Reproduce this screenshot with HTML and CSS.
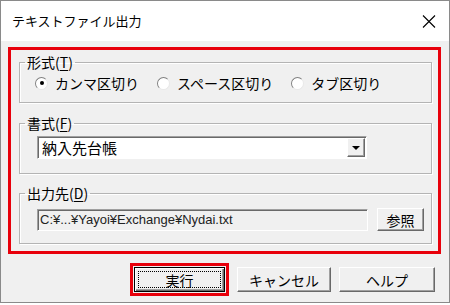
FILE: index.html
```html
<!doctype html>
<html lang="ja">
<head>
  <meta charset="utf-8">
  <title>テキストファイル出力</title>
  <link rel="stylesheet" href="styles.css">
</head>
<body>
  <div class="window">
    <div class="titlebar">
      <span class="title">テキストファイル出力</span>
      <svg class="close" width="14" height="13" viewBox="0 0 14 13">
        <path d="M1 0.5L13 12.5M13 0.5L1 12.5" stroke="#000" stroke-width="1.1" fill="none"/>
      </svg>
    </div>
    <div class="client">
      <div class="highlight">
        <fieldset class="group">
          <legend>形式(<u>T</u>)</legend>
          <div class="group-body radios">
            <label class="radio"><span class="radio-mark checked"></span>カンマ区切り</label>
            <label class="radio"><span class="radio-mark"></span>スペース区切り</label>
            <label class="radio"><span class="radio-mark"></span>タブ区切り</label>
          </div>
        </fieldset>
        <fieldset class="group">
          <legend>書式(<u>F</u>)</legend>
          <div class="group-body body-combo">
            <div class="combo">
              <span class="combo-text">納入先台帳</span>
              <span class="combo-btn"><span class="arrow"></span></span>
            </div>
          </div>
        </fieldset>
        <fieldset class="group">
          <legend>出力先(<u>D</u>)</legend>
          <div class="group-body body-path">
            <div class="path">C:¥...¥Yayoi¥Exchange¥Nydai.txt</div>
            <button class="btn btn-small">参照</button>
          </div>
        </fieldset>
      </div>
      <div class="buttons">
        <div class="mark">
          <button class="btn btn-default"><span class="focus">実行</span></button>
        </div>
        <button class="btn">キャンセル</button>
        <button class="btn btn-help">ヘルプ</button>
      </div>
    </div>
  </div>
</body>
</html>
```

FILE: styles.css
```css
body{
    margin: 0;
    background: #fff;
    font-family: "Noto Sans CJK JP", sans-serif;
    color: #000;
}
.window{
    width: 448px;
    height: 301px;
    border: 1px solid #8a8a8a;
    background: #f0f0f0;
}
.titlebar{
    height: 40px;
    background: #fff;
    display: flex;
    align-items: center;
    justify-content: space-between;
    padding: 0 13px 0 11px;
}
.title{
    font-size: 13px;
    line-height: 16px;
}
.close{
    display: block;
}
.highlight{
    margin: 6px 0 0 7px;
    width: 433px;
    box-sizing: border-box;
    border: 3px solid #e8000b;
    padding: 4px 6px 7px 8px;
}
.group{
    margin: 0;
    padding: 0;
    border: 1px solid #b4b4b4;
    box-shadow: inset 1px 1px #fff, 1px 1px #fff;
    font-size: 14px;
    line-height: 16px;
}
.group + .group{
    margin-top: 12px;
}
.group:last-child{
    margin-top: 11px;
}
.group legend{
    margin-left: 5px;
    padding: 0 2px;
    line-height: 16px;
}
.group u{
    text-decoration-thickness: 1px;
    text-underline-offset: 2px;
}
.group-body{
    display: flex;
    align-items: center;
}
.radios{
    padding: 5px 0 11px 15px;
}
.radio{
    display: flex;
    align-items: center;
    gap: 7px;
    margin-right: 18px;
}
.radio-mark{
    width: 13px;
    height: 13px;
    box-sizing: border-box;
    border-radius: 50%;
    border: 1px solid;
    border-color: #808080 #e8e8e8 #e8e8e8 #808080;
    background: #fff;
    display: flex;
    align-items: center;
    justify-content: center;
}
.radio-mark.checked::after{
    content: "";
    width: 4px;
    height: 4px;
    border-radius: 50%;
    background: #000;
}
.body-combo{
    padding: 5px 0 14px 17px;
}
.combo{
    width: 330px;
    height: 23px;
    box-sizing: border-box;
    border: 1px solid;
    border-color: #a0a0a0 #fff #fff #a0a0a0;
    box-shadow: inset 1px 1px #696969;
    background: #fff;
    display: flex;
    align-items: center;
    padding: 1px 1px 1px 4px;
}
.combo-text{
    flex: 1;
    font-size: 15px;
    line-height: 18px;
}
.combo-btn{
    width: 18px;
    height: 19px;
    box-sizing: border-box;
    background: #f0f0f0;
    border: 1px solid;
    border-color: #fff #696969 #696969 #fff;
    box-shadow: inset -1px -1px #a0a0a0;
    display: flex;
    align-items: center;
    justify-content: center;
}
.arrow{
    width: 0;
    height: 0;
    border-left: 4px solid transparent;
    border-right: 4px solid transparent;
    border-top: 4px solid #000;
}
.body-path{
    padding: 7px 0 12px 17px;
    gap: 9px;
}
.path{
    width: 331px;
    height: 22px;
    box-sizing: border-box;
    border: 1px solid;
    border-color: #a0a0a0 #fff #fff #a0a0a0;
    box-shadow: inset 1px 1px #696969;
    padding: 0 2px;
    font-family: "Liberation Sans", sans-serif;
    font-size: 13px;
    line-height: 20px;
    color: #222;
}
.btn{
    width: 94px;
    height: 25px;
    box-sizing: border-box;
    margin: 0;
    padding: 0;
    background: #f0f0f0;
    border: 1px solid;
    border-color: #fff #696969 #696969 #fff;
    box-shadow: inset -1px -1px #a0a0a0;
    font-family: "Noto Sans CJK JP", sans-serif;
    font-size: 14px;
    line-height: 16px;
    color: #000;
}
.btn-small{
    width: 47px;
    height: 23px;
}
.btn-help{
    width: 96px;
}
.buttons{
    display: flex;
    justify-content: flex-end;
    align-items: center;
    gap: 8px;
    margin-top: 9px;
    padding-right: 14px;
}
.mark{
    border: 3px solid #e8000b;
    padding: 1px;
    display: flex;
}
.btn-default{
    width: 91px;
    border: 1px solid #000;
    box-shadow: inset 1px 1px #fff, inset -1px -1px #696969, inset -2px -2px #a0a0a0;
    padding: 3px;
    display: flex;
}
.focus{
    flex: 1;
    border: 1px dotted #000;
    display: flex;
    align-items: center;
    justify-content: center;
}
```
